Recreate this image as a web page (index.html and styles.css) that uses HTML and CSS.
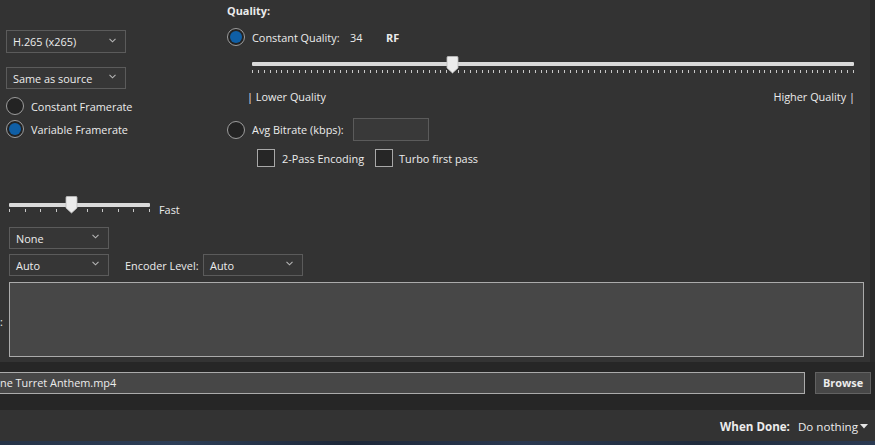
FILE: index.html
```html
<!DOCTYPE html>
<html>
<head>
<meta charset="utf-8">
<link rel="stylesheet" href="styles.css">
</head>
<body>
<div class="app">
  <div class="main">
    <div class="panel">
      <div class="top">
        <div class="left">
          <div class="select w120"><span>H.265 (x265)</span><svg class="chev" width="7" height="5" viewBox="0 0 7 5"><polyline points="0.5,0.8 3.5,3.8 6.5,0.8" fill="none" stroke="#b5b5b5" stroke-width="1.1"/></svg></div>
          <div class="select w120 gap14"><span>Same as source</span><svg class="chev" width="7" height="5" viewBox="0 0 7 5"><polyline points="0.5,0.8 3.5,3.8 6.5,0.8" fill="none" stroke="#b5b5b5" stroke-width="1.1"/></svg></div>
          <div class="radio-row first"><span class="radio"></span><span>Constant Framerate</span></div>
          <div class="radio-row"><span class="radio checked"></span><span>Variable Framerate</span></div>
        </div>
        <div class="right">
          <div class="q-title">Quality:</div>
          <div class="cq-row">
            <span class="radio checked"></span>
            <span class="cq-label">Constant Quality:</span>
            <span class="cq-val">34</span>
            <span class="bold">RF</span>
          </div>
          <div class="qslider">
            <div class="track"></div>
            <div class="ticks qticks"></div>
            <svg class="thumb qthumb" width="13" height="18" viewBox="0 0 13 18"><path d="M1 1.5 Q1 0.5 2 0.5 H11 Q12 0.5 12 1.5 V12 L6.5 17 L1 12 Z" fill="#ececec" stroke="#bdbdbd" stroke-width="0.8"/></svg>
          </div>
          <div class="q-labels"><span>| Lower Quality</span><span>Higher Quality |</span></div>
          <div class="ab-row">
            <span class="radio"></span>
            <span class="ab-label">Avg Bitrate (kbps):</span>
            <span class="textbox"></span>
          </div>
          <div class="cb-row">
            <span class="checkbox"></span>
            <span class="cb-label1">2-Pass Encoding</span>
            <span class="checkbox"></span>
            <span class="cb-label2">Turbo first pass</span>
          </div>
        </div>
      </div>
      <div class="speed">
        <div class="sslider">
          <div class="track"></div>
          <div class="ticks sticks"></div>
          <svg class="thumb sthumb" width="13" height="18" viewBox="0 0 13 18"><path d="M1 1.5 Q1 0.5 2 0.5 H11 Q12 0.5 12 1.5 V12 L6.5 17 L1 12 Z" fill="#ececec" stroke="#bdbdbd" stroke-width="0.8"/></svg>
        </div>
        <span class="fast">Fast</span>
      </div>
      <div class="row-none">
        <div class="select w100"><span>None</span><svg class="chev" width="7" height="5" viewBox="0 0 7 5"><polyline points="0.5,0.8 3.5,3.8 6.5,0.8" fill="none" stroke="#b5b5b5" stroke-width="1.1"/></svg></div>
      </div>
      <div class="row-auto">
        <div class="select w100"><span>Auto</span><svg class="chev" width="7" height="5" viewBox="0 0 7 5"><polyline points="0.5,0.8 3.5,3.8 6.5,0.8" fill="none" stroke="#b5b5b5" stroke-width="1.1"/></svg></div>
        <span class="enc-label">Encoder Level:</span>
        <div class="select w100"><span>Auto</span><svg class="chev" width="7" height="5" viewBox="0 0 7 5"><polyline points="0.5,0.8 3.5,3.8 6.5,0.8" fill="none" stroke="#b5b5b5" stroke-width="1.1"/></svg></div>
      </div>
      <div class="row-text">
        <span class="colon">:</span>
        <div class="textarea"></div>
      </div>
    </div>
    <div class="edge"></div>
  </div>
  <div class="filebar">
    <div class="filebox">ne Turret Anthem.mp4</div>
    <div class="browse">Browse</div>
  </div>
  <div class="status">
    <span class="wd-label">When Done:</span>
    <span class="wd-value">Do nothing</span>
    <svg class="wd-arrow" width="8" height="5" viewBox="0 0 8 5"><path d="M0 0 H8 L4 4.5 Z" fill="#e6e6e6"/></svg>
  </div>
  <div class="taskbar"></div>
</div>
</body>
</html>
```

FILE: styles.css
```css
* { box-sizing: border-box; }

html, body {
  margin: 0;
  padding: 0;
}

body {
  width: 875px;
  height: 445px;
  overflow: hidden;
  background: #333333;
  font-family: "Open Sans", "Noto Sans", "DejaVu Sans", sans-serif;
  font-size: 10.9px;
  color: #ececec;
}

.app {
  display: flex;
  flex-direction: column;
  height: 445px;
}

.main {
  display: flex;
  height: 362px;
}

.panel {
  width: 870px;
  background: #333333;
}

.edge {
  flex: 1;
  background: #2a2a2a;
}

.top {
  display: grid;
  grid-template-columns: 220px 1fr;
  height: 167px;
}

.left {
  padding: 30px 0 0 6px;
}

.select {
  display: flex;
  align-items: center;
  justify-content: space-between;
  height: 23px;
  border: 1px solid #5b5b5b;
  background: #363636;
  padding: 0 9px 0 6px;
}

.w120 { width: 120px; }
.w100 { width: 100px; }

.gap14 { margin-top: 14px; height: 22px; }

.chev { margin-top: -3px; }

.radio-row {
  display: flex;
  align-items: center;
  gap: 7px;
  height: 18px;
}

.radio-row.first { margin-top: 8px; }
.radio-row + .radio-row { margin-top: 5px; }

.radio {
  width: 18px;
  height: 18px;
  flex: none;
  border-radius: 50%;
  border: 1px solid #9d9d9d;
  background: #232323;
  display: flex;
  align-items: center;
  justify-content: center;
}

.radio.checked::after {
  content: "";
  width: 12px;
  height: 12px;
  border-radius: 50%;
  background: #0f5fa6;
}

.right {
  padding: 3px 0 0 7px;
}

.q-title {
  font-weight: bold;
  height: 16px;
  line-height: 16px;
}

.bold { font-weight: bold; }

.cq-row {
  display: flex;
  align-items: center;
  margin-top: 9px;
  height: 18px;
}

.cq-label {
  margin-left: 7px;
  width: 98px;
}

.cq-val { width: 36px; }

.qslider {
  position: relative;
  margin: 10px 0 0 25px;
  width: 602px;
  height: 24px;
}

.track {
  position: relative;
  top: 6px;
  height: 4px;
  background: #dadada;
  border-radius: 1px;
}

.ticks {
  position: relative;
  top: 10px;
  height: 3px;
}

.qticks {
  background: repeating-linear-gradient(to right, #c8c8c8 0, #c8c8c8 1px, transparent 1px, transparent 5.89px);
}

.thumb {
  position: absolute;
  top: 0;
}

.qthumb { left: 194px; }

.q-labels {
  display: flex;
  justify-content: space-between;
  margin: 9px 0 0 20px;
  width: 608px;
  line-height: 16px;
}

.ab-row {
  display: flex;
  align-items: center;
  margin-top: 13px;
  height: 23px;
}

.ab-label {
  margin-left: 7px;
  width: 101px;
}

.textbox {
  width: 76px;
  height: 23px;
  border: 1px solid #5b5b5b;
  background: #393939;
}

.cb-row {
  display: flex;
  align-items: center;
  margin: 8px 0 0 30px;
  height: 18px;
}

.checkbox {
  width: 18px;
  height: 18px;
  flex: none;
  border: 1px solid #a8a8a8;
  background: #262626;
}

.cb-label1 {
  margin-left: 7px;
  width: 93px;
}

.cb-label2 { margin-left: 6px; }

.speed {
  display: flex;
  align-items: flex-start;
  margin: 29px 0 0 9px;
}

.sslider {
  position: relative;
  width: 141px;
  height: 24px;
}

.sslider .track { top: 7px; }
.sslider .ticks { top: 9px; }

.sticks {
  background: repeating-linear-gradient(to right, #c8c8c8 0, #c8c8c8 1px, transparent 1px, transparent 15.55px);
}

.sthumb { left: 56px; top: 0; }

.fast {
  margin: 6px 0 0 9px;
  line-height: 16px;
}

.row-none {
  margin: 7px 0 0 9px;
}

.row-none .select { height: 22px; }

.row-auto {
  display: flex;
  align-items: center;
  margin: 5px 0 0 9px;
}

.row-auto .select { height: 22px; }

.enc-label {
  margin-left: 16px;
  width: 78px;
}

.row-text {
  display: flex;
  align-items: center;
  margin-top: 6px;
}

.colon {
  width: 9px;
  line-height: 12px;
  margin-top: 4px;
}

.textarea {
  width: 855px;
  height: 75px;
  border: 1px solid #ababab;
  background: #474747;
}

.filebar {
  display: flex;
  align-items: flex-start;
  height: 48px;
  padding-top: 10px;
  background: #262626;
}

.filebox {
  width: 805px;
  height: 22px;
  border: 1px solid #ababab;
  border-left: none;
  background: #474747;
  line-height: 20px;
  padding-left: 0;
  white-space: nowrap;
  overflow: hidden;
}

.browse {
  margin-left: 10px;
  width: 56px;
  height: 22px;
  border: 1px solid #626262;
  background: #474747;
  font-weight: bold;
  text-align: center;
  line-height: 20px;
}

.status {
  display: flex;
  align-items: center;
  justify-content: flex-end;
  height: 31px;
  padding: 2px 7px 0 0;
  background: #333333;
}

.wd-label {
  font-weight: bold;
  font-size: 11.6px;
  margin-right: 8px;
}

.wd-value { font-size: 11.6px; }

.wd-arrow { margin-left: 2px; }

.taskbar {
  flex: 1;
  background: linear-gradient(to right, #263347 0%, #2d3e57 20%, #1d2738 40%, #2a3850 60%, #202b3c 80%, #2b3a52 100%);
}
```
